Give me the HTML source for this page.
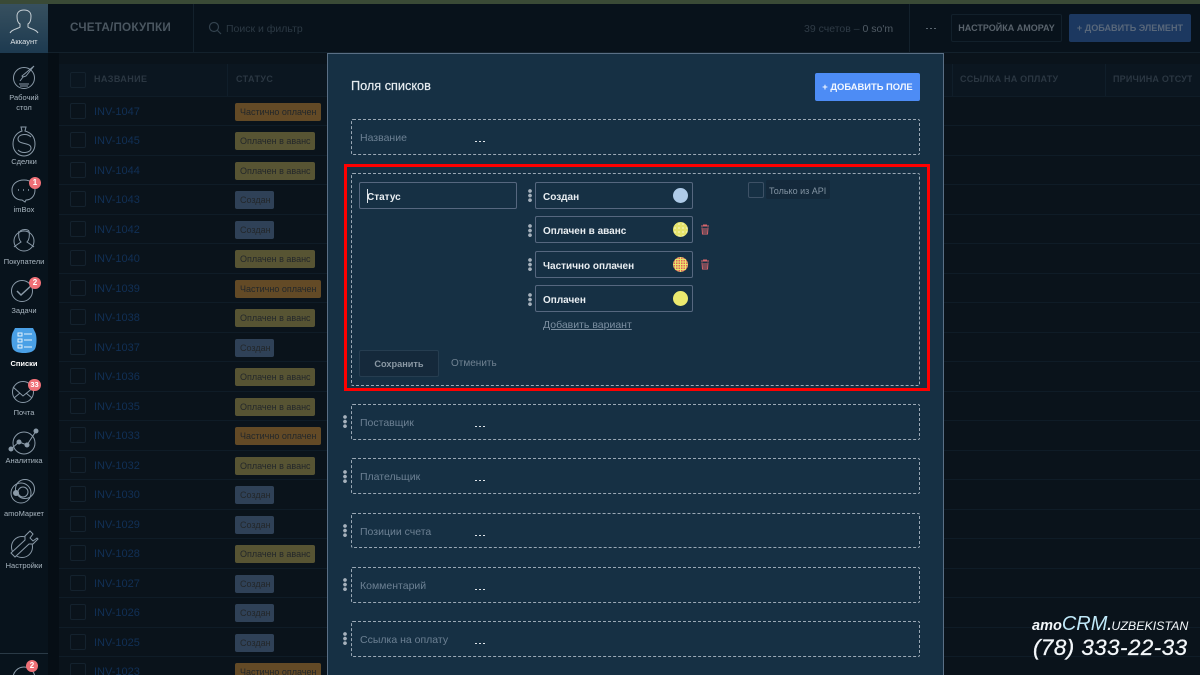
<!DOCTYPE html>
<html><head><meta charset="utf-8"><style>
html,body{margin:0;padding:0;background:#0a131b;width:1200px;height:675px;overflow:hidden;}
*{box-sizing:border-box}
#w{position:absolute;left:0;top:0;width:1200px;height:675px;overflow:hidden;font-family:"Liberation Sans","Noto Sans CJK SC",sans-serif;}
.a{position:absolute}
.l{position:absolute;white-space:nowrap;line-height:12px}
.sep{position:absolute;left:59px;width:1141px;height:1px;background:#0f1c27}
.cb{position:absolute;left:70px;width:16px;height:16px;border:1px solid #14222e;border-radius:2px}
.inv{position:absolute;left:94px;font-size:11px;line-height:14px;color:#113056;white-space:nowrap;margin-top:1px}
.chip{position:absolute;left:235px;height:18px;border-radius:2px;font-size:9px;line-height:19px;color:#23272a;padding-left:5px;white-space:nowrap}
.p{width:86px;background:#634a26}
.o{width:80px;background:#575433}
.c{width:39px;background:#2f4157}
.nav{position:absolute;left:0;width:48px;text-align:center;font-size:7.5px;line-height:10px;color:#a9b6c0;margin-top:1px}
.ic{position:absolute;left:0;width:48px;height:34px;fill:none;stroke:#8a9aa8;stroke-width:1}
.bdg{position:absolute;height:12px;min-width:12px;border-radius:6px;background:#ef7077;color:#fff;font-size:8px;font-weight:bold;line-height:12px;text-align:center}
.d{position:absolute;left:351px;width:569px;border:1px dashed #9aa8b5;border-radius:2px}
.fl{position:absolute;left:360px;font-size:10.5px;line-height:12px;color:#6c8093;white-space:nowrap;margin-top:1px}
.el{position:absolute;left:475px;width:10px;height:1px;background:repeating-linear-gradient(90deg,#dfe5ea 0 2px,transparent 2px 4px);margin-top:6px}
.inp{position:absolute;height:27px;border:1px solid #56677f;border-radius:2px;font-size:10px;line-height:27px;padding-top:1px;color:#e9eef2;font-weight:bold;padding-left:7px;white-space:nowrap}
.opt{left:535px;width:158px}
.ci{position:absolute;left:673px;width:15px;height:15px;border-radius:50%;background:#ebe96f}
.dots{position:absolute;width:4px;height:13px;background:radial-gradient(circle at 2px 2px,#a7b2bd 1.7px,transparent 2px) 0 0/4px 4.6px repeat-y}
.h{font-size:9px;font-weight:bold;color:#2b3742;letter-spacing:.4px;top:73px}
</style></head><body><div id="w">
<div class="a" style="left:0;top:0;width:1200px;height:4px;background:#3a4a36"></div>
<div class="a" style="left:0;top:4px;width:48px;height:671px;background:#08131c"></div>
<div class="a" style="left:48px;top:4px;width:11px;height:671px;background:#060e15"></div>
<div class="a" style="left:48px;top:4px;width:1152px;height:49px;background:#08121b;border-bottom:1px solid #13212c"></div>
<div class="a" style="left:0;top:4px;width:48px;height:49px;background:linear-gradient(#37505f,#1d3a50)"></div>
<svg class="a" style="left:0;top:8px" width="48" height="28" fill="none" stroke="#c5ced4" stroke-width="1"><path d="M10 25c2-4 8-4 10-6v-3c-2-1-3-4-3-8 0-4 3-6 7-6s7 2 7 6c0 4-1 7-3 8v3c2 2 8 2 10 6"/></svg>
<div class="l" style="left:0;top:36px;width:48px;text-align:center;font-size:7.5px;color:#dde3e7">Аккаунт</div>
<div class="a" style="left:193px;top:4px;width:1px;height:48px;background:#13212c"></div>
<div class="a" style="left:909px;top:4px;width:1px;height:48px;background:#13212c"></div>
<div class="l" style="left:70px;top:22px;font-size:11.7px;font-weight:bold;color:#4a5660;letter-spacing:.2px">СЧЕТА/ПОКУПКИ</div>
<svg class="a" style="left:208px;top:21px" width="14" height="14" fill="none" stroke="#33424e" stroke-width="1.2"><circle cx="6" cy="6" r="4.5"/><path d="M9.5 9.5L13 13"/></svg>
<div class="l" style="left:226px;top:23px;font-size:10.5px;color:#2c3944">Поиск и фильтр</div>
<div class="l" style="left:804px;top:23px;font-size:10.5px;color:#2f3b46">39 счетов – <span style="color:#515c66">0 so'm</span></div>
<div class="a" style="left:926px;top:28px;width:10px;height:1px;background:repeating-linear-gradient(90deg,#5b6670 0 2px,transparent 2px 4px)"></div>
<div class="a" style="left:951px;top:14px;width:111px;height:28px;border:1px solid #12202b;border-radius:2px;font-size:9px;font-weight:bold;color:#59636c;line-height:27px;text-align:center;white-space:nowrap">НАСТРОЙКА AMOPAY</div>
<div class="a" style="left:1069px;top:14px;width:122px;height:28px;background:#1c3860;border-radius:2px;font-size:9.1px;font-weight:bold;color:#58677a;line-height:28px;text-align:center;white-space:nowrap">+ ДОБАВИТЬ ЭЛЕМЕНТ</div>

<div class="a" style="left:59px;top:64px;width:1141px;height:32px;background:#0b1620"></div>
<div class="a" style="left:227px;top:64px;width:1px;height:32px;background:#101e2a"></div>
<div class="a" style="left:952px;top:64px;width:1px;height:32px;background:#101e2a"></div>
<div class="a" style="left:1105px;top:64px;width:1px;height:32px;background:#101e2a"></div>
<div class="cb" style="top:72px"></div>
<div class="l h" style="left:94px">НАЗВАНИЕ</div>
<div class="l h" style="left:236px">СТАТУС</div>
<div class="l h" style="left:960px;letter-spacing:.2px">ССЫЛКА НА ОПЛАТУ</div>
<div class="l h" style="left:1113px;width:79px;overflow:hidden;letter-spacing:.2px">ПРИЧИНА ОТСУТ</div>

<div class="sep" style="top:96px"></div><div class="sep" style="top:125px"></div><div class="sep" style="top:155px"></div><div class="sep" style="top:184px"></div><div class="sep" style="top:214px"></div><div class="sep" style="top:243px"></div><div class="sep" style="top:273px"></div><div class="sep" style="top:302px"></div><div class="sep" style="top:332px"></div><div class="sep" style="top:361px"></div><div class="sep" style="top:391px"></div><div class="sep" style="top:420px"></div><div class="sep" style="top:450px"></div><div class="sep" style="top:479px"></div><div class="sep" style="top:509px"></div><div class="sep" style="top:538px"></div><div class="sep" style="top:568px"></div><div class="sep" style="top:597px"></div><div class="sep" style="top:627px"></div><div class="sep" style="top:656px"></div>

<div class="cb" style="top:103px"></div><div class="inv" style="top:104px">INV-1047</div><div class="chip p" style="top:103px">Частично оплачен</div>
<div class="cb" style="top:132px"></div><div class="inv" style="top:133px">INV-1045</div><div class="chip o" style="top:132px">Оплачен в аванс</div>
<div class="cb" style="top:162px"></div><div class="inv" style="top:163px">INV-1044</div><div class="chip o" style="top:162px">Оплачен в аванс</div>
<div class="cb" style="top:191px"></div><div class="inv" style="top:192px">INV-1043</div><div class="chip c" style="top:191px">Создан</div>
<div class="cb" style="top:221px"></div><div class="inv" style="top:222px">INV-1042</div><div class="chip c" style="top:221px">Создан</div>
<div class="cb" style="top:250px"></div><div class="inv" style="top:251px">INV-1040</div><div class="chip o" style="top:250px">Оплачен в аванс</div>
<div class="cb" style="top:280px"></div><div class="inv" style="top:281px">INV-1039</div><div class="chip p" style="top:280px">Частично оплачен</div>
<div class="cb" style="top:309px"></div><div class="inv" style="top:310px">INV-1038</div><div class="chip o" style="top:309px">Оплачен в аванс</div>
<div class="cb" style="top:339px"></div><div class="inv" style="top:340px">INV-1037</div><div class="chip c" style="top:339px">Создан</div>
<div class="cb" style="top:368px"></div><div class="inv" style="top:369px">INV-1036</div><div class="chip o" style="top:368px">Оплачен в аванс</div>
<div class="cb" style="top:398px"></div><div class="inv" style="top:399px">INV-1035</div><div class="chip o" style="top:398px">Оплачен в аванс</div>
<div class="cb" style="top:427px"></div><div class="inv" style="top:428px">INV-1033</div><div class="chip p" style="top:427px">Частично оплачен</div>
<div class="cb" style="top:457px"></div><div class="inv" style="top:458px">INV-1032</div><div class="chip o" style="top:457px">Оплачен в аванс</div>
<div class="cb" style="top:486px"></div><div class="inv" style="top:487px">INV-1030</div><div class="chip c" style="top:486px">Создан</div>
<div class="cb" style="top:516px"></div><div class="inv" style="top:517px">INV-1029</div><div class="chip c" style="top:516px">Создан</div>
<div class="cb" style="top:545px"></div><div class="inv" style="top:546px">INV-1028</div><div class="chip o" style="top:545px">Оплачен в аванс</div>
<div class="cb" style="top:575px"></div><div class="inv" style="top:576px">INV-1027</div><div class="chip c" style="top:575px">Создан</div>
<div class="cb" style="top:604px"></div><div class="inv" style="top:605px">INV-1026</div><div class="chip c" style="top:604px">Создан</div>
<div class="cb" style="top:634px"></div><div class="inv" style="top:635px">INV-1025</div><div class="chip c" style="top:634px">Создан</div>
<div class="cb" style="top:663px"></div><div class="inv" style="top:664px">INV-1023</div><div class="chip p" style="top:663px">Частично оплачен</div>

<!-- sidebar -->
<svg class="ic" style="top:64px"><circle cx="24" cy="14" r="10.5"/><path d="M34 2l-8 10-3 1-1-1zM20 17l3-4M19 20h10M20 22h8"/></svg>
<div class="nav" style="top:92px">Рабочий<br>стол</div>
<svg class="ic" style="top:125px"><path d="M21 2h5l-1 4c7 2 10 7 10 13 0 7-5 12-11 12S13 26 13 19c0-6 3-11 9-13z"/><path d="M31 12c-4-4-13-3-13 2 0 6 13 3 13 9 0 5-9 6-13 2"/></svg>
<div class="nav" style="top:156px">Сделки</div>
<svg class="ic" style="top:176px"><path d="M24 4c7 0 11 4 11 10s-4 10-9 10l-1 2-3-2c-6 0-10-4-10-10S17 4 24 4z"/><path d="M18 14h1M23 14h1M28 14h1" stroke-width="1.6"/></svg>
<div class="nav" style="top:204px">imBox</div>
<svg class="ic" style="top:225px"><circle cx="24" cy="16" r="10"/><path d="M19 6c-1 6 0 9 2 11-3 2-6 4-7 5M29 6c1 6 0 9-2 11 3 2 6 4 7 5M20 6c3-2 7-2 9 0"/></svg>
<div class="nav" style="top:256px">Покупатели</div>
<svg class="ic" style="top:277px"><circle cx="22" cy="14" r="10.5"/><path d="M17 14l4 4 12-11" stroke-width="1.5"/></svg>
<div class="nav" style="top:305px">Задачи</div>
<svg class="a" style="left:0;top:327px" width="48" height="28"><path d="M15 1h18l2 4c2 3 2 13 0 17-2 3-6 4-11 4s-9-1-11-4c-2-4-2-14 0-17z" fill="#4aa0e6"/><path d="M18 6h4v3h-4zM24 7h8M18 12h4v3h-4zM24 13h8M18 18h4v3h-4zM24 20h8" stroke="#e6f2fb" fill="none"/></svg>
<div class="nav" style="top:358px;color:#fff;font-weight:bold">Списки</div>
<svg class="ic" style="top:378px"><circle cx="23" cy="14" r="10.5"/><path d="M13 9l10 9 11-9M14 20l6-5M32 20l-6-5"/></svg>
<div class="nav" style="top:407px">Почта</div>
<svg class="ic" style="top:427px"><circle cx="24" cy="16" r="11"/><path d="M11 22l8-7 8 3 9-14"/><circle cx="11" cy="22" r="2" fill="#8a9aa8"/><circle cx="19" cy="15" r="2" fill="#8a9aa8"/><circle cx="27" cy="18" r="2" fill="#8a9aa8"/><circle cx="36" cy="4" r="2" fill="#8a9aa8"/></svg>
<div class="nav" style="top:455px">Аналитика</div>
<svg class="ic" style="top:477px"><circle cx="25" cy="12" r="9.5"/><circle cx="21" cy="16" r="10"/><circle cx="23" cy="15" r="5"/><circle cx="16" cy="16" r="2.5" fill="#8a9aa8"/></svg>
<div class="nav" style="top:508px">amoМаркет</div>
<svg class="ic" style="top:530px"><circle cx="22" cy="17" r="10.5"/><path d="M30 1l-5 5v4l-14 13 4 4 14-13h4l5-5-1-1-4 3-3-3 3-4z" fill="#08131c"/></svg>
<div class="nav" style="top:560px">Настройки</div>
<div class="a" style="left:0;top:653px;width:48px;height:1px;background:#2a3a46"></div>
<svg class="ic" style="top:662px"><circle cx="24" cy="16" r="11"/></svg>
<div class="bdg" style="left:29px;top:177px">1</div>
<div class="bdg" style="left:29px;top:277px">2</div>
<div class="bdg" style="left:28px;top:379px;min-width:13px;font-size:7.5px">33</div>
<div class="bdg" style="left:26px;top:660px">2</div>

<!-- modal -->
<div class="a" style="left:327px;top:53px;width:617px;height:630px;background:#163044;border:1px solid #5a6f85"></div>
<div class="l" style="left:351px;top:80px;font-size:12.7px;color:#e6ecf0;-webkit-text-stroke:.2px #e6ecf0">Поля списков</div>
<div class="a" style="left:815px;top:73px;width:105px;height:28px;background:#4d8cf5;border-radius:2px;color:#f3f7ff;font-size:9.4px;font-weight:bold;line-height:28px;text-align:center;white-space:nowrap">+ ДОБАВИТЬ ПОЛЕ</div>

<div class="d" style="top:119px;height:36px"></div>
<div class="fl" style="top:131px">Название</div><div class="el" style="top:135px"></div>

<div class="a" style="left:344px;top:164px;width:586px;height:227px;border:3px solid #f00"></div>
<div class="d" style="top:173px;height:213px"></div>
<div class="inp" style="left:359px;top:182px;width:158px">Статус</div>
<div class="a" style="left:367px;top:189px;width:1px;height:14px;background:#dfe6ec"></div>
<div class="dots" style="left:528px;top:189px"></div>
<div class="dots" style="left:528px;top:224px"></div>
<div class="dots" style="left:528px;top:258px"></div>
<div class="dots" style="left:528px;top:293px"></div>
<div class="inp opt" style="top:182px">Создан</div><div class="ci" style="top:188px;background:#aecbe8"></div>
<div class="inp opt" style="top:216px">Оплачен в аванс</div><div class="ci" style="top:222px;background:radial-gradient(circle,#fafad0 .5px,transparent 1px) 0 0/4px 4px,#e6e46c"></div>
<div class="inp opt" style="top:251px">Частично оплачен</div><div class="ci" style="top:257px;background:radial-gradient(circle,#e2605a .7px,transparent 1px) 0 0/2.5px 2.5px,#ebe46c"></div>
<div class="inp opt" style="top:285px">Оплачен</div><div class="ci" style="top:291px"></div>
<svg class="a" style="left:700px;top:224px" width="10" height="11" fill="none" stroke="#d9666c"><path d="M1 2h8M3.5 2V1h3v1M2 3.5l.5 6.5h5l.5-6.5M4 4v5M6 4v5"/></svg>
<svg class="a" style="left:700px;top:259px" width="10" height="11" fill="none" stroke="#d9666c"><path d="M1 2h8M3.5 2V1h3v1M2 3.5l.5 6.5h5l.5-6.5M4 4v5M6 4v5"/></svg>
<div class="l" style="left:543px;top:319px;font-size:10.5px;color:#7d90a2;text-decoration:underline">Добавить вариант</div>
<div class="a" style="left:359px;top:350px;width:80px;height:27px;border:1px solid #263d50;border-radius:2px;background:#15293b;color:#8a98a4;font-size:9.2px;font-weight:bold;line-height:26px;text-align:center">Сохранить</div>
<div class="l" style="left:451px;top:358px;font-size:10px;color:#708292">Отменить</div>
<div class="a" style="left:748px;top:182px;width:16px;height:16px;border:1px solid #3d5166;border-radius:2px"></div>
<div class="a" style="left:766px;top:180px;width:64px;height:19px;background:#14293b;border-radius:2px"></div>
<div class="l" style="left:769px;top:185px;font-size:9px;color:#8293a2">Только из API</div>

<div class="dots" style="left:343px;top:415px"></div><div class="d" style="top:404px;height:36px"></div>
<div class="fl" style="top:416px">Поставщик</div><div class="el" style="top:420px"></div>
<div class="dots" style="left:343px;top:470px"></div><div class="d" style="top:458px;height:36px"></div>
<div class="fl" style="top:470px">Плательщик</div><div class="el" style="top:474px"></div>
<div class="dots" style="left:343px;top:524px"></div><div class="d" style="top:513px;height:35px"></div>
<div class="fl" style="top:525px">Позиции счета</div><div class="el" style="top:529px"></div>
<div class="dots" style="left:343px;top:578px"></div><div class="d" style="top:567px;height:36px"></div>
<div class="fl" style="top:579px">Комментарий</div><div class="el" style="top:583px"></div>
<div class="dots" style="left:343px;top:632px"></div><div class="d" style="top:621px;height:36px"></div>
<div class="fl" style="top:633px">Ссылка на оплату</div><div class="el" style="top:637px"></div>

<!-- watermark -->
<div class="l" style="left:1032px;top:616px;font-size:14.5px;line-height:16px;font-style:italic;font-weight:bold;color:#f3f7fa">amo<span style="color:#bfe8f8;font-size:20px;font-weight:normal">CRM</span>.<span style="font-size:12.4px;font-weight:normal">UZBEKISTAN</span></div>
<div class="l" style="left:1033px;top:636px;font-size:22.3px;line-height:24px;font-style:italic;color:#f3f7fa;letter-spacing:.5px;-webkit-text-stroke:.3px #f3f7fa">(78) 333-22-33</div>
</div></body></html>
